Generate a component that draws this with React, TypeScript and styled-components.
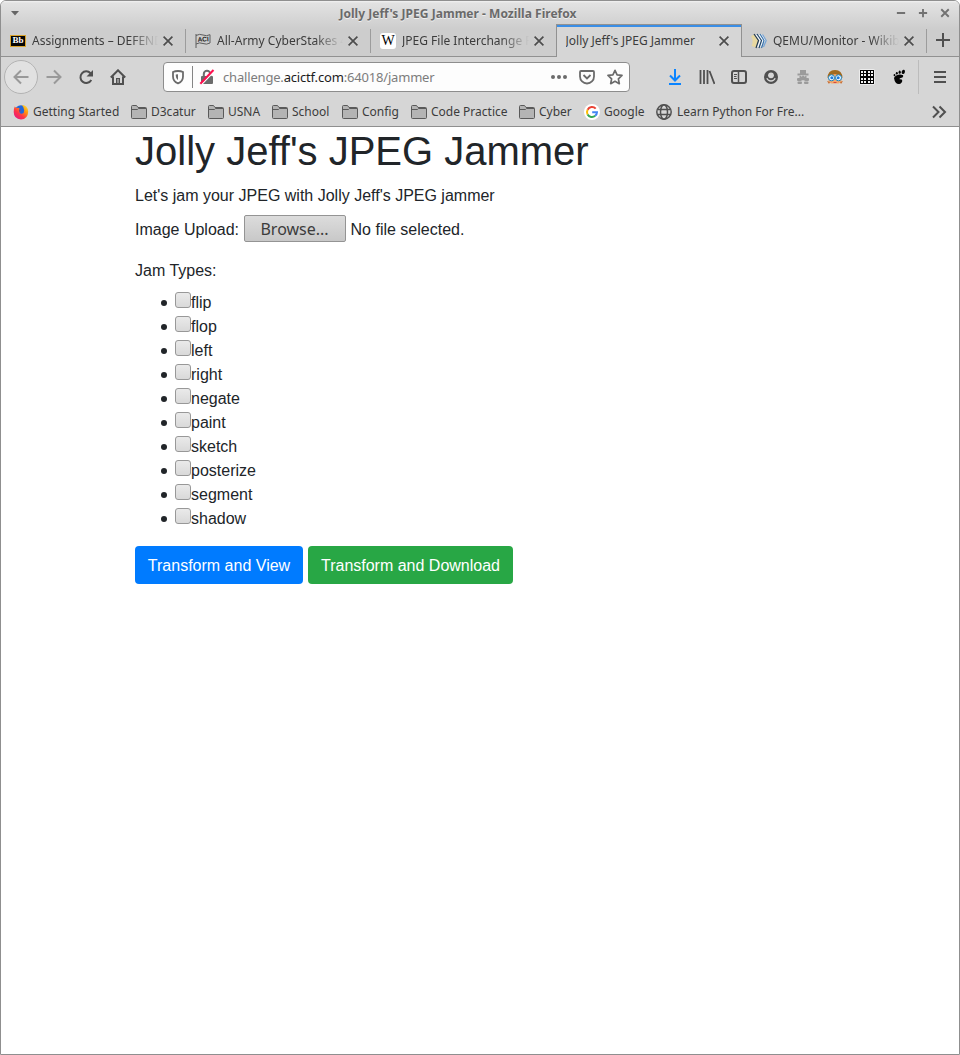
import React from "react";
import styled, { createGlobalStyle, css } from "styled-components";

const GlobalStyle = createGlobalStyle`
  *, *::before, *::after { box-sizing: border-box; }
  html, body { margin: 0; height: 100%; background: #fff; }
  #root { height: 100%; }
`;

const Window = styled.div`
  height: 1055px;
  display: flex;
  flex-direction: column;
  overflow: hidden;
  border: 1px solid #8f8f8f;
  border-radius: 6px 6px 0 0;
  background: #fff;
  color: #3c3c3c;
  font: 12px/16px "Noto Sans", sans-serif;
`;

const Header = styled.div`
  height: 56px;
  flex: none;
  display: flex;
  flex-direction: column;
  background: linear-gradient(#f2f2f2 0, #e2e2e2 2px, #cdcdcd 28px, #cdcdcd);
`;

const TitleBar = styled.div`
  height: 23px;
  display: flex;
  align-items: center;
  padding: 1px 8px 0 9px;
`;

const WindowTitle = styled.div`
  flex: 1;
  padding: 2px 0 0 1px;
  text-align: center;
  font-weight: 700;
  letter-spacing: 0.03px;
  color: #6a6a6a;
  text-shadow: 0 1px #efefef;
`;

const WindowButtons = styled.div`
  display: flex;
  gap: 10px;
`;

const TabStrip = styled.div`
  flex: 1;
  display: flex;
`;

const Tab = styled.div<{ $active?: boolean; $divider?: boolean; $lead?: number }>`
  width: ${(p) => (p.$active ? 186 : 185)}px;
  height: 33px;
  flex: none;
  display: flex;
  align-items: center;
  padding: 1px ${(p) => (p.$divider ? 13 : 12)}px 0 ${(p) => p.$lead ?? 9}px;
  border-bottom: 1px solid #919191;
  ${(p) =>
    p.$divider &&
    css`
      background: linear-gradient(#9c9c9c, #9c9c9c) right 5px / 1px 24px no-repeat;
    `}
  ${(p) =>
    p.$active &&
    css`
      background: #d6d6d6;
      border: 1px solid #919191;
      border-bottom: 0;
      box-shadow: inset 0 2px #3a8ee6;
      padding-top: 0;
    `}
`;

const TabTitle = styled.div<{ $fade?: boolean }>`
  flex: 1;
  min-width: 0;
  overflow: hidden;
  white-space: nowrap;
  margin: 0 5px 0 0;
  ${(p) => p.$fade && css`mask-image: linear-gradient(to left, transparent, #000 28px);`}
`;

const Favicon = styled.span`
  width: 16px;
  height: 16px;
  flex: none;
  margin-right: 6px;
  display: flex;
  align-items: center;
  justify-content: center;
`;

const BlackboardMark = styled.span`
  width: 16px;
  height: 12px;
  background: #050505;
  border: 1px solid #d9a32c;
  color: #fff;
  font: bold 9px/9px "Liberation Serif", serif;
  text-align: center;
`;

const WikipediaMark = styled.span`
  width: 16px;
  height: 16px;
  border-radius: 3px;
  background: #fff;
  color: #000;
  font: 14px/16px "Liberation Serif", serif;
  display: flex;
  justify-content: center;
`;

const NewTab = styled.div`
  flex: 1;
  display: flex;
  align-items: center;
  justify-content: center;
  border-bottom: 1px solid #919191;
`;

const Toolbar = styled.div`
  height: 40px;
  flex: none;
  display: flex;
  align-items: center;
  padding: 0 2px 0 3px;
  background: #d6d6d6;
`;

const ToolButton = styled.span`
  width: 32px;
  height: 32px;
  flex: none;
  display: flex;
  align-items: center;
  justify-content: center;
`;

const BackButton = styled(ToolButton)`
  width: 34px;
  height: 34px;
  border: 1px solid #b3b3b3;
  border-radius: 50%;
  background: #e1e1e1;
`;

const UrlBar = styled.div`
  width: 467px;
  height: 30px;
  margin: 0 29px;
  display: flex;
  align-items: center;
  padding: 0 6px;
  border: 1px solid #8d8d8d;
  border-radius: 4px;
  background: #fdfdfd;
`;

const UrlDivider = styled.span`
  width: 1px;
  height: 22px;
  margin: 0 6px;
  background: #858585;
`;

const Url = styled.div`
  flex: 1;
  margin-left: 8px;
  font-size: 13px;
  font-weight: 400;
  line-height: 18px;
  letter-spacing: -0.18px;
  color: #7c7c7c;
`;

const UrlDomain = styled.span`
  color: #1c1c1c;
`;

const UrlActions = styled.div`
  display: flex;
  gap: 12px;
`;

const ToolDivider = styled.span`
  width: 1px;
  height: 34px;
  margin: 0 5px 0 3px;
  background: #bcbcbc;
`;

const BookmarkBar = styled.div`
  height: 30px;
  flex: none;
  display: flex;
  align-items: center;
  gap: 12px;
  padding: 0 12px;
  background: #d6d6d6;
  border-bottom: 1px solid #8f8f8f;
`;

const Bookmark = styled.span<{ $width: number; $gap?: number }>`
  display: flex;
  align-items: center;
  gap: ${(p) => p.$gap ?? 4}px;
  width: ${(p) => p.$width}px;
  flex: none;
  white-space: nowrap;
`;

const Overflow = styled.span`
  margin-left: auto;
  display: flex;
`;

const Page = styled.main`
  flex: 1;
  padding: 0 134px;
  color: #212529;
  font: 16px/24px "Liberation Sans", Arial, sans-serif;
`;

const Heading = styled.h1`
  margin: 0 0 9px;
  font-size: 40px;
  line-height: 48px;
  font-weight: 400;
`;

const Intro = styled.p`
  margin: 0 0 7px;
`;

const UploadRow = styled.div`
  height: 27px;
  display: flex;
  align-items: center;
  margin-bottom: 17px;
  padding-top: 3px;
`;

const BrowseButton = styled.button`
  width: 102px;
  height: 27px;
  flex: none;
  margin: -3px 4.5px 0 5px;
  padding: 0 1px 0 0;
  border: 1px solid #949494;
  border-radius: 2px;
  background: linear-gradient(#dcdcdc, #c8c8c8);
  color: #3c3c3c;
  font: 16px/24px "Noto Sans", sans-serif;
`;

const JamList = styled.ul`
  margin: 8px 0 15px;
  padding: 0;
  list-style: none;
`;

const JamItem = styled.li`
  height: 24px;
  display: flex;
  &::before {
    content: "";
    width: 6px;
    height: 6px;
    margin: 9px 8px 0 26px;
    border-radius: 50%;
    background: #212529;
  }
`;

const JamLabel = styled.label`
  display: flex;
`;

const Checkbox = styled.input`
  appearance: none;
  width: 16px;
  height: 16px;
  margin: 1px 0 0;
  border: 1px solid #989898;
  border-radius: 3px;
  background: linear-gradient(#eaeaea, #d9d9d9);
`;

const Actions = styled.div`
  display: flex;
  gap: 5px;
`;

const SubmitButton = styled.button<{ $color: string; $width: number }>`
  width: ${(p) => p.$width}px;
  height: 38px;
  padding: 2px 0 0;
  border: 0;
  border-radius: 4px;
  background: ${(p) => p.$color};
  color: #fff;
  font: 16px/24px "Liberation Sans", Arial, sans-serif;
`;

type IconProps = { children: React.ReactNode; color?: string; width?: number; size?: number };
const IconSvg = styled.svg`
  flex: none;
`;
const Icon = ({ children, color = "#505050", width = 2, size = 16 }: IconProps) => (
  <IconSvg width={size} height={size} viewBox="0 0 16 16" fill="none" stroke={color} strokeWidth={width}>
    {children}
  </IconSvg>
);

const CloseIcon = () => (
  <svg width="10" height="10" viewBox="0 0 10 10" stroke="#4d4d4d" strokeWidth="1.7" fill="none">
    <path d="M.6.6l8.8 8.8M9.4.6L.6 9.4" />
  </svg>
);

const FolderIcon = () => (
  <Icon color="#5a5a5a" width={1}>
    <path d="M.5 13.5v-11q0-1 1-1h4l1.5 2h7.500q1 0 1 1v9q0 1-1 1h-13q-1 0-1-1z" fill="#b4b4b4" />
    <path d="M1 5.500h5.500l1-1H15" />
  </Icon>
);

const FirefoxIcon = () => (
  <Icon width={0}>
    <defs>
      <linearGradient id="fox" x1="1" y1="0" x2="0.15" y2="1">
        <stop offset="0" stopColor="#fff044" />
        <stop offset=".35" stopColor="#ff980e" />
        <stop offset=".65" stopColor="#ff3647" />
        <stop offset="1" stopColor="#e31587" />
      </linearGradient>
    </defs>
    <circle cx="8" cy="7.5" r="6.3" fill="#2366d9" />
    <path d="M1.7 2.5L3.5 4q1.8-.8 3 .3L6 6l2 .8-1.7 1q.2 2.2 2.6 2 2.5-.8 2.3-3.6Q11 3 8.8 1 14.8 1 15.2 7.8 14.8 15.3 8 15.5.8 15 .7 8 .7 4.7 1.7 2.5z" fill="url(#fox)" />
    <path d="M6 6l2 .8-1.7 1z" fill="#5b2b8e" />
  </Icon>
);

const GoogleIcon = () => (
  <Icon width={2}>
    <circle cx="8" cy="8" r="8" fill="#fff" stroke="none" />
    <path d="M11.7 4.6A5 5 0 0 0 3.6 5.7" stroke="#ea4335" />
    <path d="M3.6 5.7a5 5 0 0 0 0 4.8" stroke="#fbbc05" />
    <path d="M3.6 10.5a5 5 0 0 0 7.6 1.3" stroke="#34a853" />
    <path d="M11.2 11.8A5 5 0 0 0 13 8.2H8.2" stroke="#4285f4" />
  </Icon>
);

const GlobeIcon = () => (
  <Icon width={1.5}>
    <circle cx="8" cy="8" r="7.2" />
    <ellipse cx="8" cy="8" rx="3.5" ry="7.2" />
    <path d="M1.8 5.5h12.4M1.8 10.5h12.4" />
  </Icon>
);

const FlagIcon = () => (
  <svg width="16" height="16" viewBox="0 0 16 16">
    <path d="M1 1v14M1 2.500q3.500-2 7-.5t7-.3V10q-3.500 2-7 .5t-7 .5" fill="none" stroke="#5c5c5c" strokeWidth="1" />
    <text x="8.200" y="8.500" textAnchor="middle" fontFamily="Liberation Sans" fontWeight="700" fontSize="6.500" fill="#222" transform="rotate(-3 8 8)">ACI</text>
  </svg>
);

const WikibooksIcon = () => (
  <Icon width={1.2}>
    <path d="M0 3l3.500-1.500L7.500 8 5 14.500.5 13q2.500-5-.5-10z" fill="#e8d8a0" stroke="none" />
    <path d="M4.500 2l4 5.500L6 14h3.500l5-6.500L11 1.500z" fill="#f5f8fa" stroke="none" />
    <path d="M3 1l4.500 6.500L5 15" stroke="#20384f" />
    <path d="M6 1l4.500 6.500L8 15" stroke="#20466b" />
    <path d="M9 1l4 6.500L10.500 15" stroke="#3b76af" />
    <path d="M11.500 1.500l3.700 6L12.500 14" stroke="#76a5d8" />
  </Icon>
);

const ShieldIcon = () => (
  <Icon color="#6b6b6b" width={1.8}>
    <path d="M8 2c2 0 3.800.4 5 1v4.500c0 3-2 5.700-5 6.900-3-1.200-5-3.900-5-6.900V3c1.200-.6 3-1 5-1z" />
    <path d="M8 5.200v6Q5.800 9.500 5.800 7V5.500z" fill="#6b6b6b" stroke="none" />
  </Icon>
);

const InsecureIcon = () => (
  <Icon color="#6b6b6b">
    <path d="M4.800 8V5a3.200 3.200 0 0 1 6.400 0v3" />
    <rect x="2" y="7" width="12" height="8" rx="1" fill="#6b6b6b" stroke="none" />
    <path d="M2.200 15.800L15.200 2.200" stroke="#fdfdfd" strokeWidth="1.500" />
    <path d="M1.300 14.800L14.500 1" stroke="#ff0f4f" strokeWidth="2" />
  </Icon>
);

const BearIcon = () => (
  <Icon width={0}>
    <g fill="#9b9b9b">
      <path d="M5 1h6v4H5zM2.500 4.500h11v2h-11zM4.500 7h7v3l-2 1.500h-3l-2-1.500z" />
      <rect x="2" y="9" width="4.500" height="3" rx="1" />
      <rect x="9.500" y="9" width="4.500" height="3" rx="1" />
      <rect x="2.500" y="12.500" width="4.500" height="2.500" rx="1" />
      <rect x="9" y="12.500" width="4.500" height="2.500" rx="1" />
    </g>
    <path d="M6 6.500h1.200v1H6zM9 6.500h1.200v1H9zM7.500 11h1v4h-1z" fill="#d6d6d6" />
  </Icon>
);

const SpectacledFaceIcon = () => (
  <Icon width={1}>
    <path d="M1.500 13V7q0-5.500 6.500-5.500T14.500 7v6l-3 1.500h-7z" fill="#f2a76b" stroke="none" />
    <path d="M.5 9Q.8 1 8 1t7.500 8Q13 6 8 5 3 6 .5 9z" fill="#a16a20" stroke="none" />
    <path d="M0 12l3 1-1 2zM16 12l-3 1 1 2z" fill="#c76b2d" stroke="none" />
    <circle cx="4.500" cy="8.800" r="3" fill="#f4faff" stroke="#1583c7" />
    <circle cx="11.500" cy="8.800" r="3" fill="#f4faff" stroke="#1583c7" />
    <circle cx="4.800" cy="8.800" r="1.500" fill="#1b7be0" stroke="none" />
    <circle cx="11.200" cy="8.800" r="1.500" fill="#1b7be0" stroke="none" />
    <path d="M6.500 13.500h3" stroke="#d6483f" />
  </Icon>
);

const GridIcon = () => (
  <Icon width={0}>
    <rect x="0" y="0" width="16" height="16" rx="2" fill="#ececec" />
    <rect x="1" y="1" width="14" height="14" fill="#060606" />
    {[2, 5, 9, 12].map((y) =>
      [2, 5, 9, 12].map((x) => <rect key={`${x}-${y}`} x={x} y={y} width="2" height="2" fill="#f4f4f4" />)
    )}
  </Icon>
);

const FootIcon = () => (
  <Icon width={0}>
    <g fill="#050505">
      <path d="M3 9q1-3 5.500-3.500 4-.2 3.700 1.700-.2 1.500-2.500 1.800-1.800.4-.8 1.500 1.600-.6 2.300.7.300 2.800-2.800 3.800Q4 15.500 3 9z" />
      <ellipse cx="12.300" cy="2.900" rx="1.600" ry="2.200" transform="rotate(20 12.300 2.900)" />
      <ellipse cx="8.700" cy="3.200" rx="1.100" ry="1.600" />
      <ellipse cx="5.800" cy="4.300" rx="1" ry="1.300" />
      <ellipse cx="3.500" cy="6.200" rx=".9" ry="1.100" />
    </g>
  </Icon>
);

const folders: [string, number][] = [
  ["D3catur", 65],
  ["USNA", 52],
  ["School", 58],
  ["Config", 57],
  ["Code Practice", 96],
  ["Cyber", 53],
];

const jams = ["flip", "flop", "left", "right", "negate", "paint", "sketch", "posterize", "segment", "shadow"];

export default function App() {
  return (
    <>
      <GlobalStyle />
      <Window>
        <Header>
          <TitleBar>
            <svg width="10" height="6" viewBox="0 0 10 6"><path d="M1 1h8L5 5.500z" fill="#666" /></svg>
            <WindowTitle>Jolly Jeff's JPEG Jammer - Mozilla Firefox</WindowTitle>
            <WindowButtons>
              <Icon size={12} color="#727272" width={2.5}><path d="M2.500 8h11" /></Icon>
              <Icon size={12} color="#727272" width={2.5}><path d="M2.500 8h11M8 2.500v11" /></Icon>
              <Icon size={12} color="#727272" width={2.5}><path d="M3 3l10 10M13 3L3 13" /></Icon>
            </WindowButtons>
          </TitleBar>
          <TabStrip>
            <Tab $divider>
              <Favicon><BlackboardMark>Bb</BlackboardMark></Favicon>
              <TabTitle $fade>Assignments – DEFEND THE</TabTitle>
              <CloseIcon />
            </Tab>
            <Tab $divider>
              <Favicon><FlagIcon /></Favicon>
              <TabTitle $fade>All-Army CyberStakes 4</TabTitle>
              <CloseIcon />
            </Tab>
            <Tab>
              <Favicon><WikipediaMark>W</WikipediaMark></Favicon>
              <TabTitle $fade>JPEG File Interchange Format</TabTitle>
              <CloseIcon />
            </Tab>
            <Tab $active $lead={8.5}>
              <TabTitle>Jolly Jeff's JPEG Jammer</TabTitle>
              <CloseIcon />
            </Tab>
            <Tab $divider>
              <Favicon><WikibooksIcon /></Favicon>
              <TabTitle $fade>QEMU/Monitor - Wikibooks</TabTitle>
              <CloseIcon />
            </Tab>
            <NewTab>
              <Icon><path d="M8 1v14M1 8h14" /></Icon>
            </NewTab>
          </TabStrip>
        </Header>
        <Toolbar>
          <BackButton><Icon color="#999"><path d="M15.500 8H1.500M8 1.500L1.500 8 8 14.500" /></Icon></BackButton>
          <ToolButton><Icon color="#999"><path d="M.5 8h14M8 1.500L14.500 8 8 14.500" /></Icon></ToolButton>
          <ToolButton>
            <Icon>
              <path d="M12.500 4.200A5.800 5.800 0 1 0 13.300 11" />
              <path d="M15 1v6.500H8.500z" fill="#505050" stroke="none" />
            </Icon>
          </ToolButton>
          <ToolButton>
            <Icon>
              <path d="M.8 8.500L8 1.300l7.200 7.200M3 7.500V15h10V7.500" />
              <path d="M6 15V9h4v6z" fill="#505050" stroke="none" />
              <path d="M8 10v4" stroke="#d6d6d6" strokeWidth="1" />
            </Icon>
          </ToolButton>
          <UrlBar>
            <ShieldIcon />
            <UrlDivider />
            <InsecureIcon />
            <Url>challenge.<UrlDomain>acictf.com</UrlDomain>:64018/jammer</Url>
            <UrlActions>
              <Icon width={0}><g fill="#6b6b6b"><circle cx="2" cy="8" r="2" /><circle cx="8" cy="8" r="2" /><circle cx="14" cy="8" r="2" /></g></Icon>
              <Icon color="#6b6b6b"><path d="M2 2h12q1 0 1 1v4.500a7 7 0 0 1-14 0V3q0-1 1-1zM4.500 6L8 9.500 11.500 6" strokeWidth="1.800" /></Icon>
              <Icon color="#6b6b6b" width={1.7}><path d="M8 1.300l2.100 4.500 4.900.6-3.600 3.400.9 4.900L8 12.300l-4.300 2.400.9-4.900L1 6.400l4.900-.6z" strokeLinejoin="round" /></Icon>
            </UrlActions>
          </UrlBar>
          <ToolButton><Icon color="#0a84ff"><path d="M8 0v11M3 6.500l5 5 5-5M2 15h12" /></Icon></ToolButton>
          <ToolButton><Icon><path d="M1.500 1v14M5 1v14M8.500 1v14M10.500 2l5 13" strokeWidth="1.800" /></Icon></ToolButton>
          <ToolButton>
            <Icon>
              <rect x="1" y="2" width="14" height="12" rx="2" />
              <path d="M7.500 2v12" strokeWidth="1.500" />
              <path d="M3 5.500h3M3 7.500h2.500M3 9.500h3" strokeWidth="1" />
            </Icon>
          </ToolButton>
          <ToolButton>
            <Icon>
              <circle cx="8" cy="8" r="7" fill="#505050" stroke="none" />
              <circle cx="8" cy="6.300" r="2.900" fill="#d6d6d6" stroke="none" />
              <path d="M3.800 9.300q1.200 2.700 4.200 2.700t4.200-2.700" stroke="#d6d6d6" strokeWidth="1.300" />
            </Icon>
          </ToolButton>
          <ToolButton><BearIcon /></ToolButton>
          <ToolButton><SpectacledFaceIcon /></ToolButton>
          <ToolButton><GridIcon /></ToolButton>
          <ToolButton><FootIcon /></ToolButton>
          <ToolDivider />
          <ToolButton><Icon><path d="M2 3h12M2 8h12M2 13h12" /></Icon></ToolButton>
        </Toolbar>
        <BookmarkBar>
          <Bookmark $width={106}><FirefoxIcon />Getting Started</Bookmark>
          {folders.map(([name, width]) => (
            <Bookmark key={name} $width={width}><FolderIcon />{name}</Bookmark>
          ))}
          <Bookmark $width={60}><GoogleIcon />Google</Bookmark>
          <Bookmark $width={148} $gap={5}><GlobeIcon />Learn Python For Fre...</Bookmark>
          <Overflow><Icon><path d="M2 2.500L7.500 8 2 13.500M8.500 2.500L14 8l-5.500 5.500" /></Icon></Overflow>
        </BookmarkBar>
        <Page>
          <Heading>Jolly Jeff's JPEG Jammer</Heading>
          <Intro>Let's jam your JPEG with Jolly Jeff's JPEG jammer</Intro>
          <UploadRow>
            Image Upload: <BrowseButton>Browse...</BrowseButton> No file selected.
          </UploadRow>
          <div>Jam Types:</div>
          <JamList>
            {jams.map((jam) => (
              <JamItem key={jam}><JamLabel><Checkbox type="checkbox" />{jam}</JamLabel></JamItem>
            ))}
          </JamList>
          <Actions>
            <SubmitButton $color="#007bff" $width={168}>Transform and View</SubmitButton>
            <SubmitButton $color="#28a745" $width={205}>Transform and Download</SubmitButton>
          </Actions>
        </Page>
      </Window>
    </>
  );
}
